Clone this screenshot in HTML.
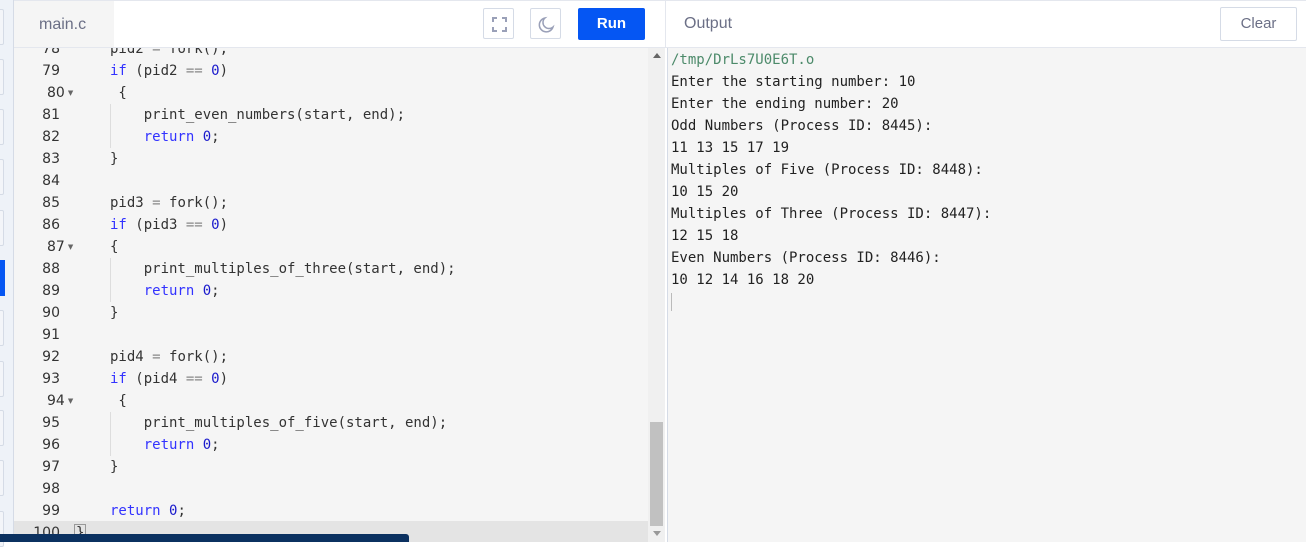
<!DOCTYPE html>
<html><head><meta charset="utf-8"><style>
*{margin:0;padding:0;box-sizing:border-box}
body{width:1306px;height:542px;overflow:hidden;background:#fff;position:relative;font-family:"DejaVu Sans Mono","Liberation Mono",monospace}
.abs{position:absolute}
.strip{left:0;top:0;width:14px;height:542px;background:#eef2f8;border-right:1px solid #d5dbe6}
.sb{position:absolute;left:0;width:4px;height:36px;border:1px solid #d5dbe6;border-left:none;border-radius:0 2px 2px 0;background:#f3f5f9}
.hdr{left:14px;top:0;width:1292px;height:48px;border-top:1px solid #e4e7ee;border-bottom:1px solid #e4e7ee}
.tab{left:14px;top:1px;width:100px;height:46px;background:#f5f5f5;font:16px "Liberation Sans",sans-serif;color:#6b6f86;padding:14px 0 0 25px}
.btn{top:8px;width:31px;height:31px;border:1px solid #d5dbe6;border-radius:2px;background:#fff}
.editor{left:14px;top:48px;width:634px;height:494px;background:#f5f5f5;overflow:hidden}
.ln{position:absolute;left:0;width:46px;text-align:right;font:14px "DejaVu Sans",sans-serif;color:#333;height:22px;line-height:22px}
.fl{width:60px;text-align:left;padding-left:33px}
.cd{position:absolute;left:96px;font-size:14px;color:#333;white-space:pre;height:22px;line-height:22px}
.k{color:#3333ff}.n{color:#1a1acc}.o{color:#888}
.fold{font-size:7px;color:#666;margin-left:3px;vertical-align:2px}
.guide{position:absolute;left:96px;width:1px;background:#ddd}
.out{left:667px;top:48px;width:639px;height:494px;background:#f5f5f5;border-left:1px solid #d5dbe6}
.ol{position:absolute;left:3px;font-size:14px;color:#222;white-space:pre;height:22px;line-height:22px}
.in{position:absolute;left:0;top:1px;width:100%;height:100%}
</style></head><body>
<div class="abs strip">
<div class="sb" style="top:9px"></div><div class="sb" style="top:59px"></div><div class="sb" style="top:109px"></div><div class="sb" style="top:159px"></div><div class="sb" style="top:210px"></div>
<div style="position:absolute;left:0;top:260px;width:5px;height:36px;background:#0556f3"></div>
<div class="sb" style="top:310px"></div><div class="sb" style="top:361px"></div><div class="sb" style="top:410px"></div><div class="sb" style="top:460px"></div><div class="sb" style="top:511px"></div>
</div>
<div class="abs hdr"></div>
<div class="abs tab" style="padding-top:15px">main.c</div>
<div class="abs btn" style="left:483px"><svg width="31" height="31" viewBox="0 0 31 31" fill="none" stroke="#9aa0b8" stroke-width="2"><path d="M9 13V9h4M18 9h4v4M22 18v4h-4M13 22H9v-4"/></svg></div>
<div class="abs btn" style="left:530px"><svg width="31" height="31" viewBox="0 0 31 31" fill="none" stroke="#9aa0b8" stroke-width="1.5"><path d="M14 9a7 7 0 1 0 8 9a6 6 0 0 1-8-9z"/></svg></div>
<div class="abs" style="left:578px;top:8px;width:67px;height:32px;background:#0556f3;border-radius:2px;color:#fff;font:bold 15px 'Liberation Sans',sans-serif;text-align:center;line-height:31px">Run</div>
<div class="abs" style="left:665px;top:1px;width:1px;height:47px;background:#e4e7ee"></div>
<div class="abs" style="left:684px;top:15px;font:16px 'Liberation Sans',sans-serif;color:#6b6f86">Output</div>
<div class="abs" style="left:1220px;top:7px;width:77px;height:34px;border:1px solid #d5dbe6;border-radius:2px;font:15px 'Liberation Sans',sans-serif;color:#6b6f86;text-align:center;line-height:31px">Clear</div>

<div class="abs editor">
<div style="position:absolute;left:0;top:473px;width:634px;height:21px;background:#e4e4e4"></div>
<div class="in">
<div class="guide" style="top:55px;height:44px"></div>
<div class="guide" style="top:209px;height:44px"></div>
<div class="guide" style="top:363px;height:44px"></div>
<div class="ln" style="top:-11px">78</div><div class="cd" style="top:-11px">pid2 <span class="o">=</span> fork();</div>
<div class="ln" style="top:11px">79</div><div class="cd" style="top:11px"><span class="k">if</span> (pid2 <span class="o">==</span> <span class="n">0</span>)</div>
<div class="ln fl" style="top:33px">80<span class="fold">▼</span></div><div class="cd" style="top:33px"> {</div>
<div class="ln" style="top:55px">81</div><div class="cd" style="top:55px">    print_even_numbers(start, end);</div>
<div class="ln" style="top:77px">82</div><div class="cd" style="top:77px">    <span class="k">return</span> <span class="n">0</span>;</div>
<div class="ln" style="top:99px">83</div><div class="cd" style="top:99px">}</div>
<div class="ln" style="top:121px">84</div>
<div class="ln" style="top:143px">85</div><div class="cd" style="top:143px">pid3 <span class="o">=</span> fork();</div>
<div class="ln" style="top:165px">86</div><div class="cd" style="top:165px"><span class="k">if</span> (pid3 <span class="o">==</span> <span class="n">0</span>)</div>
<div class="ln fl" style="top:187px">87<span class="fold">▼</span></div><div class="cd" style="top:187px">{</div>
<div class="ln" style="top:209px">88</div><div class="cd" style="top:209px">    print_multiples_of_three(start, end);</div>
<div class="ln" style="top:231px">89</div><div class="cd" style="top:231px">    <span class="k">return</span> <span class="n">0</span>;</div>
<div class="ln" style="top:253px">90</div><div class="cd" style="top:253px">}</div>
<div class="ln" style="top:275px">91</div>
<div class="ln" style="top:297px">92</div><div class="cd" style="top:297px">pid4 <span class="o">=</span> fork();</div>
<div class="ln" style="top:319px">93</div><div class="cd" style="top:319px"><span class="k">if</span> (pid4 <span class="o">==</span> <span class="n">0</span>)</div>
<div class="ln fl" style="top:341px">94<span class="fold">▼</span></div><div class="cd" style="top:341px"> {</div>
<div class="ln" style="top:363px">95</div><div class="cd" style="top:363px">    print_multiples_of_five(start, end);</div>
<div class="ln" style="top:385px">96</div><div class="cd" style="top:385px">    <span class="k">return</span> <span class="n">0</span>;</div>
<div class="ln" style="top:407px">97</div><div class="cd" style="top:407px">}</div>
<div class="ln" style="top:429px">98</div>
<div class="ln" style="top:451px">99</div><div class="cd" style="top:451px"><span class="k">return</span> <span class="n">0</span>;</div>
<div class="ln" style="top:473px">100</div><div class="cd" style="top:473px;left:60px"><span style="border:1px solid #999;padding:0 1px">}</span></div>
</div>
</div>
<div class="abs" style="left:648px;top:48px;width:17px;height:494px;background:#f0f0f0"></div>
<div class="abs" style="left:650px;top:422px;width:13px;height:104px;background:#c1c1c1"></div>
<div class="abs" style="left:653px;top:53px;width:0;height:0;border:4px solid transparent;border-bottom:5px solid #666;border-top:none"></div>
<div class="abs" style="left:653px;top:531px;width:0;height:0;border:4px solid transparent;border-top:5px solid #999;border-bottom:none"></div>
<div class="abs" style="left:0;top:534px;width:409px;height:8px;background:#0b3160;border-radius:0 3px 0 0"></div>

<div class="abs out">
<div class="in">
<div class="ol" style="top:0;color:#4c8a6a">/tmp/DrLs7U0E6T.o</div>
<div class="ol" style="top:22px">Enter the starting number: 10</div>
<div class="ol" style="top:44px">Enter the ending number: 20</div>
<div class="ol" style="top:66px">Odd Numbers (Process ID: 8445):</div>
<div class="ol" style="top:88px">11 13 15 17 19</div>
<div class="ol" style="top:110px">Multiples of Five (Process ID: 8448):</div>
<div class="ol" style="top:132px">10 15 20</div>
<div class="ol" style="top:154px">Multiples of Three (Process ID: 8447):</div>
<div class="ol" style="top:176px">12 15 18</div>
<div class="ol" style="top:198px">Even Numbers (Process ID: 8446):</div>
<div class="ol" style="top:220px">10 12 14 16 18 20</div>
<div style="position:absolute;left:3px;top:244px;width:1px;height:18px;background:#bbb"></div>
</div>
</div>
</body></html>
